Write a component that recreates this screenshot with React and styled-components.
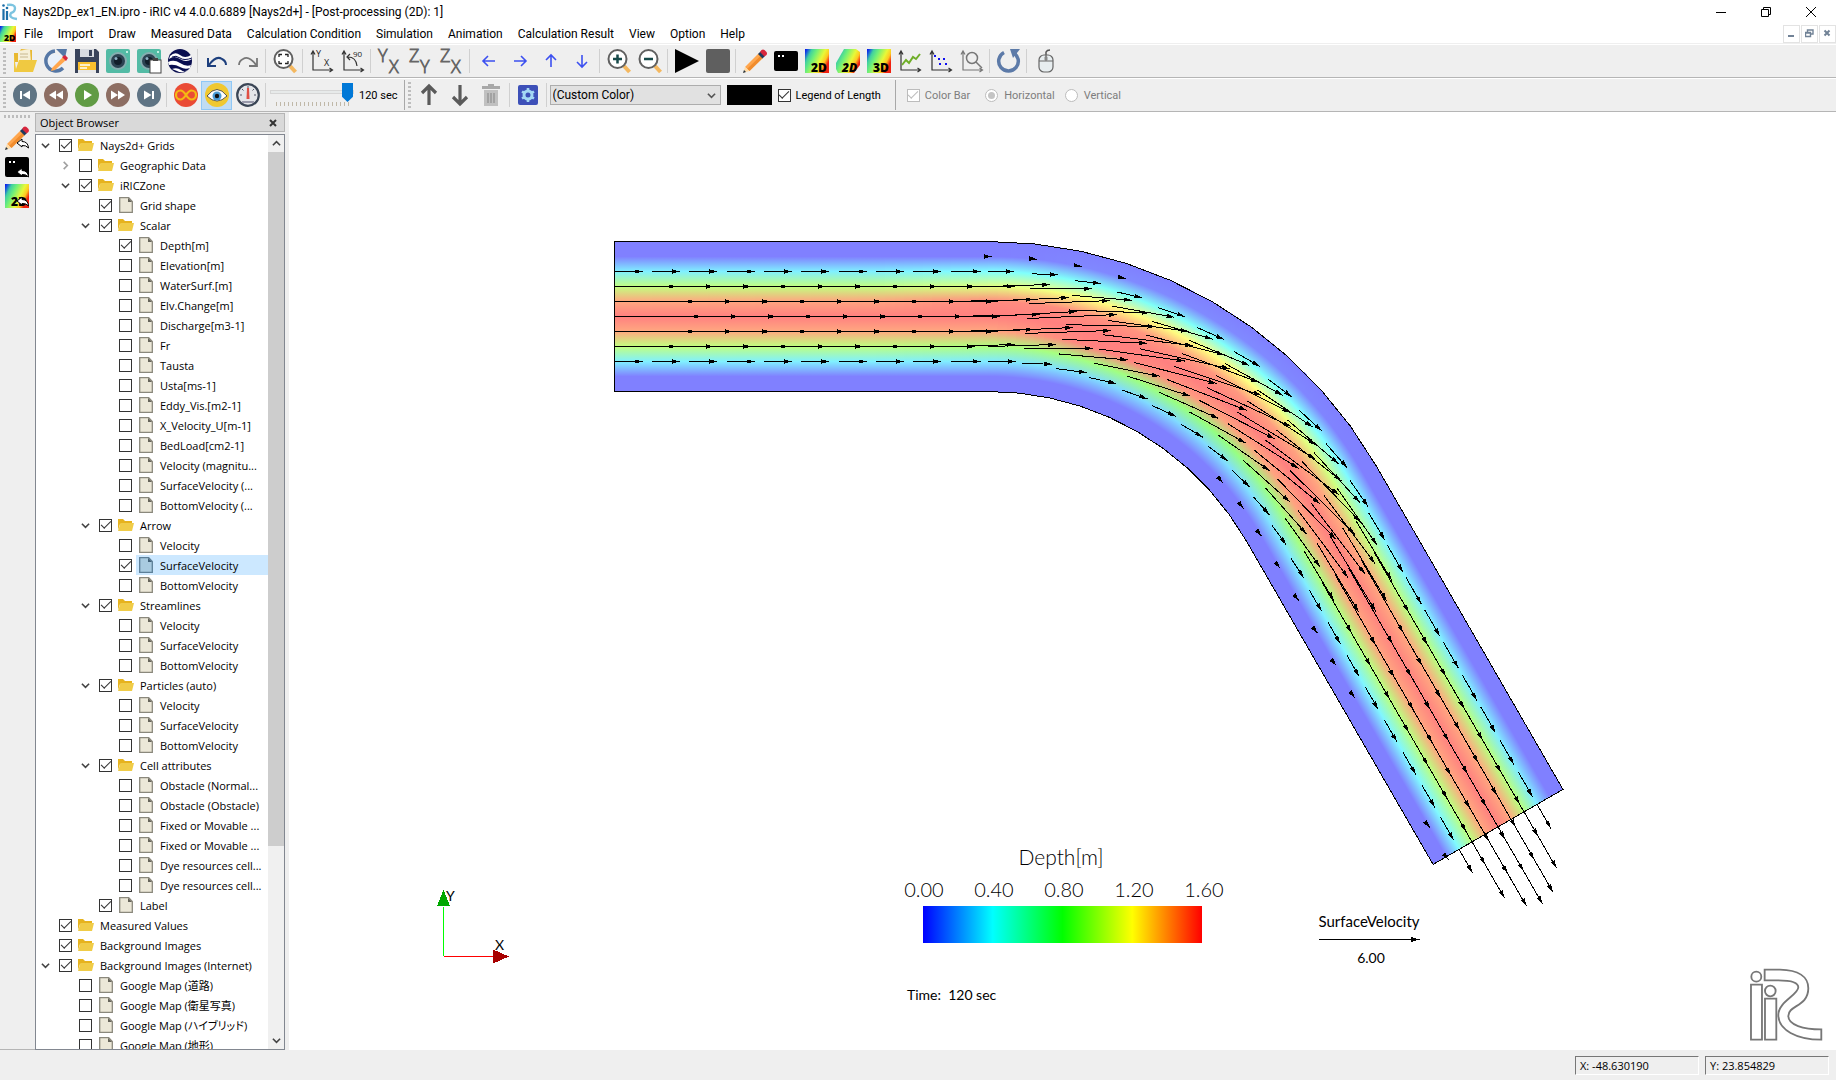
import React, { useState } from 'react'
import styled, { createGlobalStyle, css } from 'styled-components'

const GlobalStyle = createGlobalStyle`
    * { box-sizing: border-box; }
    body {
        margin: 0;
        background: #fff;
        font-family: 'Open Sans', 'Noto Sans CJK JP', sans-serif;
        font-size: 12px;
        color: #000;
    }
    button, input, select { font: inherit; color: inherit; margin: 0; }
`

/* ---------- toolbar icons ---------- */

const Svg = ({ children, size = 24 }) => (
    <svg width={size} height={size} viewBox="0 0 24 24" fill="none" overflow="visible" aria-hidden="true">{children}</svg>
)

const rainbow = (id) => (
    <linearGradient id={id} x1="0" y1="0" x2="1" y2="0.5">
        <stop offset="0" stopColor="#0808f0" />
        <stop offset="0.1" stopColor="#1850e0" />
        <stop offset="0.24" stopColor="#40d0a0" />
        <stop offset="0.42" stopColor="#70f078" />
        <stop offset="0.7" stopColor="#e8f838" />
        <stop offset="0.86" stopColor="#ffc820" />
        <stop offset="1" stopColor="#f02010" />
    </linearGradient>
)

const DimIcon = ({ id, text, skew }) => (
    <Svg>
        <defs>{rainbow(id)}</defs>
        <path d={skew ? 'M8 0h12l4 3v13l-6 8H2l-2-4v-6z' : 'M0 0h24v24H0z'} fill={`url(#${id})`} />
        <text x="6" y="23" fontSize="12" fontWeight="800" fontFamily="Open Sans, sans-serif" fontStyle={skew ? 'italic' : 'normal'} fill="#000">{text}</text>
    </Svg>
)

const PencilShape = () => (
    <g>
        <path d="M2 18 15.500 4.500l4.500 4.500L6.500 22z" fill="#ffa64d" />
        <path d="M4 20 18 6.500l2 2L6.500 22z" fill="#f08c2e" />
        <path d="M15 5l2.500-2.500 4.500 4.500L19.500 9.500z" fill="#1f3a5f" />
        <path d="M17 3l1.500-2q1.500-1 3 0l2 2q1 1.500 0 3L21.500 7.500z" fill="#d7263d" />
        <path d="M2 18l4.500 4L0 24z" fill="#ffdca8" />
        <path d="M1 21l2 2-3 1z" fill="#234" />
    </g>
)

const CameraShape = () => (
    <g>
        <rect width="24" height="24" rx="2" fill="#53bba5" />
        <circle cx="12" cy="12" r="9" fill="#86aeb0" />
        <circle cx="12" cy="12" r="7" fill="#2c4352" />
        <circle cx="12" cy="12" r="4" fill="#121f2b" />
        <circle cx="10" cy="9.500" r="1.500" fill="#8fb0c4" />
        <circle cx="21" cy="3" r="1" fill="#e8fff8" />
    </g>
)

const Magnifier = ({ children }) => (
    <Svg>
        <path d="M17 17l5.500 6" stroke="#f4b860" strokeWidth="4" />
        <circle cx="10.500" cy="10" r="9" fill="#fff" stroke="#606060" strokeWidth="2" />
        {children}
    </Svg>
)

const Axes = ({ children, color = '#333' }) => (
    <Svg>
        <path d="M3 3v18h19M1 5.500 3 2l2 3.500M19.500 19l3 2-3 2" stroke={color} strokeWidth="1.200" />
        {children}
    </Svg>
)

const Letters = ({ a, b }) => (
    <Svg>
        <g fontFamily="Open Sans, sans-serif" fontSize="18" fontWeight="300" fill="#555" stroke="#666" strokeWidth="0.800">
            <text x="0" y="13">{a}</text>
            <text x="11" y="24">{b}</text>
        </g>
    </Svg>
)

const BlueArrow = ({ d }) => <Svg><path d={d} stroke="#3c50f0" strokeWidth="1.600" /></Svg>

const Disc = ({ fill, children }) => (
    <Svg><circle cx="12" cy="12" r="12" fill={fill} />{children}</Svg>
)

const icons = {
    open: <Svg>
        <path d="M1 4h5l2-4 11 1v12H1z" fill="#e8b830" />
        <path d="M5 2l12-2 1 15H5z" fill="#f6efd8" />
        <path d="M7 5h8M7 8h8" stroke="#c8b890" />
        <path d="M1 6v17h19l4-12H6L3 20z" fill="#f0c941" />
    </Svg>,
    edit: <Svg>
        <path d="M11 2a10 10 0 1 0 8 17" stroke="#5577a5" strokeWidth="3.500" />
        <path d="M12 0h11l-2 9z" fill="#5577a5" />
        <circle cx="11" cy="12" r="7" fill="#e8f0fa" />
        <path d="M8 19 19 8l3 3-11 10-4 1z" fill="#ffa64d" />
        <path d="M18 8l3-2 3 3-2 3z" fill="#d7263d" />
    </Svg>,
    save: <Svg>
        <path d="M0 0h21l3 3v21H0z" fill="#39435a" />
        <path d="M5 0h14v8H5z" fill="#d8dbe0" />
        <path d="M14 1h3v6h-3z" fill="#39435a" />
        <path d="M3 13h18v8H3z" fill="#fbc02d" />
        <path d="M5 16h10M5 19h7" stroke="#fff" strokeWidth="1.500" />
        <path d="M3 21h18v3H3z" fill="#e8e8e8" />
    </Svg>,
    camera: <Svg><CameraShape /></Svg>,
    copyCamera: <Svg>
        <CameraShape />
        <rect x="13" y="11" width="11" height="13" fill="#fff" stroke="#444" />
        <path d="M16 9h5v3h-5z" fill="#444" />
    </Svg>,
    earth: <Disc fill="#0a0f50">
        <path d="M2 7q5-5 10-1t11 0l1 4q-6 4-12 0T1 10z" fill="#fff" />
        <path d="M4 8q4-2 8 1t12 0" stroke="#0a0f50" strokeWidth="1" />
        <path d="M0 13q6-3 12 1t11 2l-1 3q-5 2-10-1T1 16z" fill="#fff" />
        <path d="M4 20q5-2 9 1t6 0l-3 2q-4 1-7-1z" fill="#fff" />
    </Disc>,
    undo: <Svg><path d="M3 9v8h8M4 16q7-10 13-6 4 2 4 6" stroke="#1d3f7d" strokeWidth="2" /></Svg>,
    redo: <Svg><path d="M21 9v8h-8M20 16Q13 6 7 10q-4 2-4 6" stroke="#777" strokeWidth="1.800" /></Svg>,
    fit: <Magnifier><path d="M6 8V5.500h3M12 5.500h3V8M15 12v2.500h-3M9 14.500H6V12" stroke="#222" strokeWidth="1.300" /></Magnifier>,
    xy: <Axes>
        <g fontFamily="Open Sans, sans-serif" fontSize="9" fill="#222"><text x="6" y="8">Y</text><text x="14" y="17">X</text></g>
    </Axes>,
    rotate: <Axes>
        <path d="M16 17q-1-9-9-9M9 5L6 8l3 3" stroke="#333" strokeWidth="1.200" />
        <text x="12" y="8" fontFamily="Open Sans, sans-serif" fontSize="8" fill="#222">90</text>
    </Axes>,
    yx: <Letters a="Y" b="X" />,
    zy: <Letters a="Z" b="Y" />,
    zx: <Letters a="Z" b="X" />,
    left: <BlueArrow d="M18 12H6M11 7l-5 5 5 5" />,
    right: <BlueArrow d="M6 12h12M13 7l5 5-5 5" />,
    up: <BlueArrow d="M12 18V6M7 11l5-5 5 5" />,
    down: <BlueArrow d="M12 6v12M7 13l5 5 5-5" />,
    zoomIn: <Magnifier><path d="M6 10h9M10.500 5.500v9" stroke="#174a4a" strokeWidth="2.500" /></Magnifier>,
    zoomOut: <Magnifier><path d="M6 10h9" stroke="#174a4a" strokeWidth="2.500" /></Magnifier>,
    play: <Svg><path d="M0 0l24 12L0 24z" fill="#000" /></Svg>,
    stop: <Svg><rect width="24" height="24" rx="2" fill="#5f5f5f" /></Svg>,
    pencil: <Svg><PencilShape /></Svg>,
    console: <Svg><rect y="2" width="24" height="20" rx="2" fill="#000" /><path d="M4 6h2v2H4zM8 6h2v2H8z" fill="#fff" /></Svg>,
    d2: <DimIcon id="rb1" text="2D" />,
    d2s: <DimIcon id="rb2" text="2D" skew />,
    d3: <DimIcon id="rb3" text="3D" />,
    line: <Axes><path d="M4 16l4-5 3 3 4-6 3 2 4-5" stroke="#6fae28" strokeWidth="2" /></Axes>,
    scatter: <Axes><path d="M5 6h2v2H5zM9 9h2v2H9zM14 9h2v2h-2zM10 14h2v2h-2zM16 14h2v2h-2z" fill="#1010f0" /></Axes>,
    graphZoom: <Axes color="#777"><circle cx="12" cy="9" r="5.500" stroke="#777" strokeWidth="1.500" /><path d="M16 13l6 6" stroke="#777" strokeWidth="1.500" /></Axes>,
    reload: <Svg>
        <path d="M16 3.500A9.800 9.800 0 1 1 7 3.500" stroke="#5c7aa8" strokeWidth="3.500" />
        <path d="M13 0h10l-7 9z" fill="#5c7aa8" />
    </Svg>,
    mouse: <Svg>
        <path d="M12 7V3q1-2 4-2" stroke="#555" strokeWidth="1.500" />
        <rect x="5" y="6" width="14" height="17" rx="5" fill="#e8eef0" stroke="#666" strokeWidth="1.200" />
        <path d="M5 12h14M12 6v6" stroke="#666" strokeWidth="1.200" />
        <rect x="10.500" y="7" width="3" height="5" rx="1.500" fill="#888" />
    </Svg>,
    first: <Disc fill="#5f7484"><path d="M7 8h2v8H7zM17 7.500v9L9.500 12z" fill="#fff" /></Disc>,
    rewind: <Disc fill="#8d6e63"><path d="M12 7.500v9L5 12zM19 7.500v9L12 12z" fill="#fff" /></Disc>,
    run: <Disc fill="#619b45"><path d="M9 7l8 5-8 5z" fill="#fff" /></Disc>,
    forward: <Disc fill="#8d6e63"><path d="M5 7.500v9l7-4.500zM12 7.500v9l7-4.500z" fill="#fff" /></Disc>,
    last: <Disc fill="#5f7484"><path d="M15 8h2v8h-2zM7 7.500v9l7.500-4.500z" fill="#fff" /></Disc>,
    loop: <Disc fill="#ea4b35">
        <path d="M12 12c-2-3-3.500-4.500-5.500-4.500a4.500 4.500 0 0 0 0 9c2 0 3.500-1.500 5.500-4.500s3.500-4.500 5.500-4.500a4.500 4.500 0 0 1 0 9c-2 0-3.500-1.500-5.500-4.500z" stroke="#f5b912" strokeWidth="2.200" />
    </Disc>,
    eye: <Disc fill="#f0c830">
        <path d="M2 13q10-13 20 0-10 10-20 0z" fill="#fff" stroke="#333" strokeWidth="0.800" />
        <circle cx="12" cy="13" r="4.500" fill="#4a9ad4" />
        <circle cx="12" cy="13" r="2.200" fill="#111" />
    </Disc>,
    gauge: <Svg>
        <circle cx="12" cy="12" r="10.800" fill="#e4e6ea" stroke="#3b4656" strokeWidth="2.200" />
        <path d="M12 3v3M4 12h2M18 12h2M6 6l1.500 1.500M18 6l-1.500 1.500" stroke="#556" />
        <path d="M11 5h2l.5 11h-3z" fill="#e04f44" />
        <path d="M6 19h12" stroke="#99a" strokeWidth="2" />
    </Svg>,
    moveUp: <Svg><path d="M12 22V3M5 10l7-7 7 7" stroke="#5a5a5a" strokeWidth="3.200" /></Svg>,
    moveDown: <Svg><path d="M12 2v19M5 14l7 7 7-7" stroke="#5a5a5a" strokeWidth="3.200" /></Svg>,
    trash: <Svg>
        <path d="M3 3h18v3H3zM9 1h6v2H9z" fill="#a8a8a8" />
        <path d="M5 7h14v16H5z" fill="#c0c0c0" />
        <path d="M9 10v10M12 10v10M15 10v10" stroke="#989898" strokeWidth="1.500" />
    </Svg>,
    gear: <Svg>
        <rect x="2" y="2" width="20" height="20" rx="2" fill="#3d50b8" />
        <circle cx="12" cy="12" r="4" stroke="#a4d8f4" strokeWidth="3" />
        <path d="M12 5v2.500M12 16.500V19M6 8.500l2 1.200M16 14.300l2 1.200M6 15.500l2-1.200M16 9.700l2-1.200" stroke="#a4d8f4" strokeWidth="2.600" />
    </Svg>,
}

/* small reply arrow shown over the "back to ..." icons */
const BackArrow = () => (
    <path d="M12 17l5-4v2.500q6 0 6.500 6.500-2.500-3-6.500-2.500V21z" fill="#fff" stroke="#000" strokeWidth="1" />
)

const FolderIcon = () => (
    <svg width="16" height="14" viewBox="0 0 16 14" aria-hidden="true">
        <path d="M0 1h5l2 2h7v3H0z" fill="#e6b31e" />
        <path d="M0 1v11l2-6h12V4H6L4 1z" fill="#e6b31e" />
        <path d="M2.500 5H16l-2 8H0z" fill="#f0cc48" />
    </svg>
)

const FileIcon = ({ tint }) => (
    <svg width="14" height="16" viewBox="0 0 14 16" aria-hidden="true">
        <path d="M.7.700h9L13.300 4.500v10.800H.7z" fill={tint ? '#a9cbe0' : '#ece8d8'} stroke={tint ? '#5c7f98' : '#8a887c'} strokeWidth="1.300" />
        <path d="M9 1v4h4z" fill={tint ? '#42627a' : '#66645a'} />
    </svg>
)

/* ---------- window frame ---------- */

const Window = styled.div`
    display: flex;
    flex-direction: column;
    height: 100vh;
    background: #efefef;
`

const TitleBar = styled.header`
    display: flex;
    align-items: center;
    height: 24px;
    padding-left: 2px;
    background: #fff;
`

const Title = styled.h1`
    flex: 1;
    margin: 0 0 0 5px;
    font-family: Roboto, sans-serif;
    font-size: 12px;
    font-weight: 400;
    line-height: 24px;
    white-space: nowrap;
`

const WindowButton = styled.button`
    display: grid;
    place-items: center;
    width: 45px;
    height: 20px;
    padding: 0;
    border: 0;
    background: transparent;
    &:last-child { margin-right: 3px; }
`

const MenuBar = styled.nav`
    display: flex;
    align-items: center;
    height: 20px;
    border-bottom: 1px solid #efefef;
    background: #fff;
`

const MenuItems = styled.div`
    display: flex;
    flex: 1;
    gap: 15px;
    margin-left: 8px;
`

const MenuItem = styled.button`
    padding: 0;
    border: 0;
    background: transparent;
    font-family: Roboto, sans-serif;
    font-size: 12px;
    line-height: 18px;
    white-space: nowrap;
`

const MdiButton = styled.button`
    display: grid;
    place-items: center;
    width: 17px;
    height: 18px;
    margin-left: 1px;
    padding: 0;
    border: 1px solid #e3e3e3;
    background: #fff;
`

const ToolBar = styled.div`
    display: flex;
    align-items: center;
    height: 34px;
    border-top: 1px solid #fff;
    border-bottom: 1px solid #b5b5b5;
    white-space: nowrap;
`

const Grip = styled.span`
    width: 3px;
    height: 26px;
    margin: 0 3px;
    background: repeating-linear-gradient(#bdbdbd 0 2px, transparent 2px 4px);
`

const ToolButton = styled.button`
    display: grid;
    place-items: center;
    width: 31px;
    height: 29px;
    padding: 0;
    border: 1px solid transparent;
    background: transparent;
    ${p => p.$active && css`
        border-color: #90c8f6;
        background: #c0dcf3;
    `}
`

const Separator = styled.span`
    width: 1px;
    height: 24px;
    margin: 0 3px 0 2px;
    background: #d0d0d0;
`

const Divider = styled.span`
    width: 1px;
    height: 30px;
    margin-left: ${p => p.$gap}px;
    background: #a8a8a8;
`

const SliderBox = styled.label`
    display: flex;
    flex-direction: column;
    width: 84px;
    height: 26px;
    margin-left: 1px;
`

const Slider = styled.input`
    width: 84px;
    height: 20px;
    appearance: none;
    background: transparent;
    &::-webkit-slider-runnable-track {
        height: 4px;
        border: 1px solid #d6d6d6;
        background: #e7eaea;
    }
    &::-webkit-slider-thumb {
        appearance: none;
        width: 11px;
        height: 19px;
        margin-top: -8px;
        background: #0078d7;
        clip-path: polygon(0 0, 100% 0, 100% 72%, 50% 100%, 0 72%);
    }
`

const Ticks = styled.span`
    height: 4px;
    margin: 0 4px 0 6px;
    background: repeating-linear-gradient(90deg, #c0b8a8 0 1px, transparent 1px 4px);
`

const ToolText = styled.span`
    margin-left: ${p => p.$gap || 5}px;
    font-family: Roboto, 'Noto Sans CJK JP', sans-serif;
    font-size: 11px;
    color: ${p => (p.$muted ? '#7d7d7d' : '#000')};
`

const SelectWrap = styled.div`
    display: grid;
    align-items: center;
    & > * { grid-area: 1 / 1; }
    & > svg { justify-self: end; margin-right: 5px; pointer-events: none; }
`

const Select = styled.select`
    width: 171px;
    height: 20px;
    padding: 0 2px;
    appearance: none;
    border: 1px solid #adadad;
    border-radius: 0;
    background: #e1e1e1;
    font-family: Roboto, sans-serif;
    font-size: 12px;
`

const ColorButton = styled.button`
    width: 45px;
    height: 20px;
    margin: 0 6px;
    padding: 0;
    border: 0;
    background: #000;
`

const CheckLabel = styled.label`
    display: flex;
    align-items: center;
    margin-left: ${p => p.$gap || 0}px;
`

const CheckBox = styled.input`
    display: grid;
    place-items: center;
    flex: none;
    width: 13px;
    height: 13px;
    appearance: none;
    border: 1px solid ${p => (p.disabled ? '#bcbcbc' : '#333')};
    border-radius: ${p => (p.type === 'radio' ? '50%' : 0)};
    background: #fff;
    &:checked::after {
        content: '';
        ${p => p.type === 'radio' ? css`
            width: 7px;
            height: 7px;
            border-radius: 50%;
            background: #c4c4c4;
        ` : css`
            width: 9px;
            height: 4px;
            margin-top: -3px;
            border: solid ${p.disabled ? '#bcbcbc' : '#333'};
            border-width: 0 0 1px 1px;
            transform: rotate(-45deg);
        `}
    }
`

const Workspace = styled.main`
    display: flex;
    flex: 1;
    min-height: 0;
`

const SideBar = styled.div`
    display: flex;
    flex-direction: column;
    align-items: center;
    width: 35px;
    padding-right: 1px;
    border-bottom: 1px solid #b5b5b5;
`

const SideGrip = styled.span`
    width: 26px;
    height: 3px;
    margin: 3px 0 5px;
    background: repeating-linear-gradient(90deg, #bdbdbd 0 2px, transparent 2px 4px);
`

const Dock = styled.aside`
    display: flex;
    flex-direction: column;
    width: 250px;
    margin-right: 4px;
`

const DockTitle = styled.div`
    display: flex;
    align-items: center;
    justify-content: space-between;
    height: 19px;
    margin: 1px 0 2px;
    padding: 0 6px 0 4px;
    border: 1px solid #b5b5b5;
    background: #d9d9d9;
    font-size: 11px;
`

const DockClose = styled.button`
    display: grid;
    place-items: center;
    width: 10px;
    height: 14px;
    padding: 0;
    border: 0;
    background: transparent;
`

const TreeFrame = styled.div`
    display: flex;
    flex: 1;
    min-height: 0;
    border: 1px solid #828790;
    background: #fff;
`

const Tree = styled.ul`
    flex: 1;
    margin: 0;
    padding: 0;
    overflow: hidden;
    list-style: none;
`

const TreeRow = styled.li`
    display: flex;
    align-items: center;
    height: 20px;
    padding-left: ${p => p.$level * 20 + 2}px;
`

const Expander = styled.button`
    display: grid;
    place-items: center;
    width: 14px;
    height: 14px;
    margin-right: 7px;
    padding: 0;
    border: 0;
    background: transparent;
    visibility: ${p => (p.$shown ? 'visible' : 'hidden')};
`

const TreeLabel = styled.label`
    display: flex;
    align-items: center;
    flex: 1;
    height: 20px;
    margin-left: 4px;
    padding-left: 2px;
    font-size: 11px;
    font-feature-settings: 'palt';
    white-space: nowrap;
    background: ${p => (p.$selected ? '#cce8ff' : 'transparent')};
    & > svg { flex: none; margin-right: ${p => (p.$file ? 7 : 6)}px; margin-left: ${p => (p.$file ? 1 : 0)}px; }
`

const ScrollBar = styled.div`
    display: flex;
    flex-direction: column;
    width: 16px;
    background: #f0f0f0;
`

const ScrollButton = styled.button`
    display: grid;
    place-items: center;
    height: 17px;
    padding: 0;
    border: 0;
    background: transparent;
`

const Thumb = styled.span`
    flex: 694;
    background: #cdcdcd;
`

const Trough = styled.span`
    flex: 186;
`

const Viewport = styled.section`
    flex: 1;
    min-width: 0;
    background: #fff;
    & > svg { display: block; width: 100%; height: 100%; }
`

const StatusBar = styled.footer`
    display: flex;
    align-items: center;
    justify-content: flex-end;
    gap: 6px;
    height: 30px;
    padding-right: 7px;
`

const StatusField = styled.output`
    width: 124px;
    height: 19px;
    padding-left: 4px;
    border: 1px solid;
    border-color: #777 #fff #fff #777;
    font-size: 11px;
    line-height: 17px;
`

/* ---------- simulation result ---------- */

// grid of the channel: 31 sections, 11 nodes across, 60 degree bend
const START = { x: 614.5, y: 241.5 }
const BEND_X = 988
const RADIUS = 448
const CENTER_Y = START.y + RADIUS
const STEP = 37.4
const SIN60 = Math.sin(Math.PI / 3)

const node = (i, j) => {
    if (i <= 10) return [START.x + (BEND_X - START.x) * i / 10, START.y + 15 * j]
    const a = Math.min(i - 10, 10) * 6 * Math.PI / 180
    const r = RADIUS - 15 * j
    const over = Math.max(i - 20, 0) * STEP
    return [BEND_X + r * Math.sin(a) + over * 0.5, CENTER_Y - r * Math.cos(a) + over * SIN60]
}

// relative depth across the channel at some sections
const depthKeys = [
    [0, [0, 0, .22, .63, .92, 1, .92, .63, .22, 0, 0]],
    [7, [0, 0, .22, .63, .93, 1, .92, .62, .22, 0, 0]],
    [10, [0, 0, .25, .69, .98, 1, .92, .59, .21, 0, 0]],
    [13, [0, .02, .27, .76, .96, 1, 1, .57, .18, 0, 0]],
    [17, [0, .02, .26, .75, .95, 1, .93, .54, .18, 0, 0]],
    [20, [0, 0, .24, .65, .92, 1, .93, .57, .2, 0, 0]],
    [24, [0, 0, .22, .61, .92, .99, .93, .61, .23, 0, 0]],
    [30, [0, 0, .21, .61, .92, 1, .92, .62, .24, 0, 0]],
]

const ramp = [[0, 0, 255], [0, 255, 255], [0, 255, 0], [255, 255, 0], [255, 0, 0]]

const depthColor = (t) => {
    const k = Math.min(Math.floor(t * 4), 3)
    const f = t * 4 - k
    const c = ramp[k].map((v, n) => Math.round((v + (ramp[k + 1][n] - v) * f + 255) / 2))
    return `rgb(${c.join(',')})`
}

const depthAt = (i) => {
    const n = Math.max(depthKeys.findIndex(k => k[0] >= i), 1)
    const [i0, a] = depthKeys[n - 1]
    const [i1, b] = depthKeys[n]
    return a.map((v, j) => v + (b[j] - v) * (i - i0) / (i1 - i0))
}

// arrow vectors (dx, dy) for sections 10..21 of each grid line
const bendArrows = {
    2: [[26, 0], [26, 1], [26, 3], [25, 6], [27, 9], [27, 12], [26, 15], [24, 18], [23, 21], [21, 24], [18, 26], [16, 27]],
    3: [[62, -2], [62, 0], [60, 5], [62, 11], [61, 18], [60, 25], [58, 32], [55, 37], [51, 44], [46, 50], [40, 57], [36, 60]],
    4: [[81, -4], [81, -3], [81, 3], [81, 11], [79, 20], [77, 29], [74, 37], [69, 44], [65, 51], [59, 61], [51, 68], [44, 73]],
    5: [[89, -5], [90, -4], [90, 2], [90, 11], [90, 20], [87, 29], [84, 39], [78, 47], [74, 55], [65, 64], [54, 71], [46, 76]],
    6: [[85, -4], [86, -3], [85, 4], [86, 12], [83, 21], [80, 31], [76, 39], [71, 45], [66, 54], [58, 60], [50, 67], [42, 69]],
    7: [[68, -2], [69, 0], [69, 6], [66, 13], [63, 20], [59, 26], [56, 31], [52, 36], [47, 42], [41, 46], [35, 49], [30, 50]],
    8: [[28, 0], [30, 1], [31, 4], [27, 6], [26, 9], [24, 11], [22, 13], [20, 15], [18, 17], [16, 18], [14, 19], [13, 20]],
}

const straight = { 2: 28, 3: 62, 4: 81, 5: 87, 6: 81, 7: 62, 8: 28 }
const outlet = { 2: [31, 28], 3: [69, 65], 4: [84, 84], 5: [88, 89], 6: [80, 83], 7: [58, 65], 8: [24, 27] }

const arrows = []
for (let j = 2; j <= 8; j++) {
    for (let i = 0; i <= 30; i++) {
        const [x, y] = node(i, j)
        let v
        if (i < 10) v = [straight[j] + (i === 9 ? 2 : 0), i === 9 && j > 3 && j < 8 ? -2 : 0]
        else if (i <= 21) v = bendArrows[j][i - 10]
        else {
            const [a, b] = outlet[j]
            const len = a + (b - a) * (i - 22) / 8
            v = [len * 0.5, len * SIN60]
        }
        arrows.push([x, y, x + v[0], y + v[1]])
    }
}
// still water near the banks
;[10, 11, 12, 13].forEach(i => {
    const [x, y] = node(i, 1)
    arrows.push([x, y, x + 4, y + (i - 10) * 0.3])
})
;[18, 19, 20, 21, 22, 23, 24, 25, 29, 30].forEach(i => {
    const [x, y] = node(i, 9)
    arrows.push([x, y, x + 2.5, y + 3])
})

const headPath = ([x0, y0, x1, y1], size = 8) => {
    const len = Math.hypot(x1 - x0, y1 - y0)
    const ux = (x1 - x0) / len
    const uy = (y1 - y0) / len
    const bx = x1 - ux * size
    const by = y1 - uy * size
    const w = size * 0.28
    return `M${x1} ${y1}L${bx - uy * w} ${by + ux * w}L${bx + uy * w} ${by - ux * w}Z`
}

const SLICES = 4
const slices = Array.from({ length: 30 * SLICES }, (_, n) => {
    const i0 = n / SLICES
    const i1 = (n + 1) / SLICES
    return {
        id: `depth${n}`,
        corners: [node(i0, 0), node(Math.min(i1 + 0.04, 30), 0), node(Math.min(i1 + 0.04, 30), 10), node(i0, 10)],
        from: node((i0 + i1) / 2, 0),
        to: node((i0 + i1) / 2, 10),
        colors: depthAt((i0 + i1) / 2).map(depthColor),
    }
})

const sections = Array.from({ length: 31 }, (_, i) => i)
const outline = [...sections.map(i => node(i, 0)), ...sections.map(i => node(30 - i, 10))]
const points = (list) => list.map(p => p.join(',')).join(' ')

const SceneText = styled.text`
    font-family: Lato, sans-serif;
    font-weight: ${p => (p.$bold ? 400 : 300)};
    font-size: ${p => p.$size}px;
    text-anchor: ${p => p.$anchor || 'start'};
    fill: #000;
    white-space: pre;
`

const Scene = () => (
    <svg viewBox="289 112 1547 938" role="img" aria-label="Depth and surface velocity">
        <defs>
            {slices.map(s => (
                <linearGradient key={s.id} id={s.id} gradientUnits="userSpaceOnUse" x1={s.from[0]} y1={s.from[1]} x2={s.to[0]} y2={s.to[1]}>
                    {s.colors.map((c, j) => <stop key={j} offset={j / 10} stopColor={c} />)}
                </linearGradient>
            ))}
            <linearGradient id="scale">
                {ramp.map((c, k) => <stop key={k} offset={k / 4} stopColor={`rgb(${c.join(',')})`} />)}
            </linearGradient>
        </defs>

        <g shapeRendering="crispEdges">
            {slices.map(s => <polygon key={s.id} points={points(s.corners)} fill={`url(#${s.id})`} />)}
            <polygon points={points(outline)} fill="none" stroke="#000" />
            {arrows.map((a, n) => <line key={n} x1={a[0]} y1={a[1]} x2={a[2]} y2={a[3]} stroke="#000" />)}
            <path d={arrows.map(a => headPath(a)).join('')} fill="#000" />

            <path d="M443.500 956V907" stroke="#0f0" />
            <path d="M443.500 956.500H493" stroke="#f00" />
            <path d="M443.500 890l6.500 16h-13z" fill="#00a800" />
            <path d="M509 956.500L493 949.500v14z" fill="#a80000" />

            <rect x="923" y="906" width="279" height="37" fill="url(#scale)" />
            <path d="M1319 939.500h101" stroke="#000" />
            <path d="M1420 939.500l-9-2.500v5z" fill="#000" />
        </g>

        <SceneText $size={14} $bold x="446" y="901">Y</SceneText>
        <SceneText $size={14} $bold x="495" y="950">X</SceneText>

        <SceneText $size={21} $anchor="middle" x="1061" y="865">Depth[m]</SceneText>
        {['0.00', '0.40', '0.80', '1.20', '1.60'].map((v, k) => (
            <SceneText key={v} $size={20} $anchor="middle" x={924 + k * 70} y="897">{v}</SceneText>
        ))}
        <SceneText $size={15} $bold $anchor="middle" x="1369" y="927">SurfaceVelocity</SceneText>
        <SceneText $size={14} $bold $anchor="middle" x="1371" y="963">6.00</SceneText>
        <SceneText $size={14} $bold x="907" y="1000">Time:  120 sec</SceneText>

        <g transform="translate(1540 940) scale(0.3333)" fill="#fff" stroke="#777" strokeWidth="5.500">
            <circle cx="649" cy="110" r="15" />
            <circle cx="691" cy="153" r="16" />
            <path d="M633 134h33v165h-33zM675 176h34v123h-34z" />
            <path d="M674 89H720C775 90 805 110 805 145C805 200 745 195 745 228C745 255 790 268 844 268V299C770 299 715 270 715 225C715 185 775 165 775 142C775 125 750 121 715 121H674Z" />
        </g>
    </svg>
)

/* ---------- data ---------- */

const menus = ['File', 'Import', 'Draw', 'Measured Data', 'Calculation Condition', 'Simulation', 'Animation', 'Calculation Result', 'View', 'Option', 'Help']

const mainTools = [
    'open', 'edit', 'save', 'camera', 'copyCamera', 'earth', '|', 'undo', 'redo', '|', 'fit', '|', 'xy', 'rotate', '|',
    'yx', 'zy', 'zx', '|', 'left', 'right', 'up', 'down', '|', 'zoomIn', 'zoomOut', '|', 'play', 'stop', '|',
    'pencil', 'console', 'd2', 'd2s', 'd3', 'line', 'scatter', 'graphZoom', '|', 'reload', '|', 'mouse',
]

const playTools = ['first', 'rewind', 'run', 'forward', 'last', '|', 'loop', 'eye', 'gauge', '|']

// level, name, checked, expander ('v' open, '>' closed), file
const vectors = ['Velocity', 'SurfaceVelocity', 'BottomVelocity']
const file = (level, name, checked) => ({ level, name, checked, file: true })
const folder = (level, name, checked, arrow) => ({ level, name, checked, arrow })

const treeItems = [
    folder(0, 'Nays2d+ Grids', true, 'v'),
    folder(1, 'Geographic Data', false, '>'),
    folder(1, 'iRICZone', true, 'v'),
    file(2, 'Grid shape', true),
    folder(2, 'Scalar', true, 'v'),
    file(3, 'Depth[m]', true),
    ...['Elevation[m]', 'WaterSurf.[m]', 'Elv.Change[m]', 'Discharge[m3-1]', 'Fr', 'Tausta', 'Usta[ms-1]', 'Eddy_Vis.[m2-1]',
        'X_Velocity_U[m-1]', 'BedLoad[cm2-1]', 'Velocity (magnitu...', 'SurfaceVelocity (...', 'BottomVelocity (...'].map(n => file(3, n, false)),
    folder(2, 'Arrow', true, 'v'),
    ...vectors.map((n, k) => ({ ...file(3, n, k === 1), selected: k === 1 })),
    folder(2, 'Streamlines', true, 'v'),
    ...vectors.map(n => file(3, n, false)),
    folder(2, 'Particles (auto)', true, 'v'),
    ...vectors.map(n => file(3, n, false)),
    folder(2, 'Cell attributes', true, 'v'),
    ...['Obstacle (Normal...', 'Obstacle (Obstacle)', 'Fixed or Movable ...', 'Fixed or Movable ...', 'Dye resources cell...', 'Dye resources cell...'].map(n => file(3, n, false)),
    file(2, 'Label', true),
    folder(0, 'Measured Values', true),
    folder(0, 'Background Images', true),
    folder(0, 'Background Images (Internet)', true, 'v'),
    ...['道路', '衛星写真', 'ハイブリッド', '地形'].map(n => file(1, `Google Map (${n})`, false)),
]

const Chevron = ({ dir = 'down', color = '#444', size = 9 }) => {
    const paths = { down: 'M1 3l4 4 4-4', up: 'M1 7l4-4 4 4', right: 'M3 1l4 4-4 4' }
    return (
        <svg width={size} height={size} viewBox="0 0 10 10" fill="none" aria-hidden="true">
            <path d={paths[dir]} stroke={color} strokeWidth="1.800" />
        </svg>
    )
}

const Tools = ({ names, active }) => names.map((name, n) => (
    name === '|'
        ? <Separator key={n} />
        : <ToolButton key={n} aria-label={name} $active={name === active}>{icons[name]}</ToolButton>
))

const ObjectBrowser = () => {
    const [checks, setChecks] = useState(treeItems.map(t => t.checked))
    const toggle = (n) => setChecks(checks.map((c, k) => (k === n ? !c : c)))

    return (
        <Dock>
            <DockTitle>
                Object Browser
                <DockClose aria-label="Close Object Browser">
                    <svg width="8" height="8" viewBox="0 0 8 8"><path d="M1 1l6 6M7 1L1 7" stroke="#333" strokeWidth="2" /></svg>
                </DockClose>
            </DockTitle>
            <TreeFrame>
                <Tree>
                    {treeItems.map((t, n) => (
                        <TreeRow key={n} $level={t.level}>
                            <Expander $shown={!!t.arrow} aria-label="Expand">
                                <Chevron dir={t.arrow === '>' ? 'right' : 'down'} color={t.arrow === '>' ? '#a0a0a0' : '#444'} />
                            </Expander>
                            <CheckBox type="checkbox" id={`item${n}`} checked={checks[n]} onChange={() => toggle(n)} />
                            <TreeLabel htmlFor={`item${n}`} $file={t.file} $selected={t.selected}>
                                {t.file ? <FileIcon tint={t.selected} /> : <FolderIcon />}
                                {t.name}
                            </TreeLabel>
                        </TreeRow>
                    ))}
                </Tree>
                <ScrollBar>
                    <ScrollButton aria-label="Scroll up"><Chevron dir="up" /></ScrollButton>
                    <Thumb />
                    <Trough />
                    <ScrollButton aria-label="Scroll down"><Chevron /></ScrollButton>
                </ScrollBar>
            </TreeFrame>
        </Dock>
    )
}

const App = () => {
    const [time, setTime] = useState(120)
    const [legend, setLegend] = useState(true)

    return (
        <Window>
            <GlobalStyle />
            <TitleBar>
                <svg width="16" height="18" viewBox="0 0 16 18" fill="none" aria-hidden="true">
                    <path d="M1.500 6v11M5 8v9" stroke="#1d6fa8" strokeWidth="2.200" />
                    <circle cx="1.500" cy="2.500" r="1.300" fill="#1d6fa8" />
                    <circle cx="5" cy="5" r="1.300" fill="#1d6fa8" />
                    <path d="M5 2q8-1 8 3t-4 5q-3 5 6 6" stroke="#7cc4e0" strokeWidth="2.400" />
                </svg>
                <Title>Nays2Dp_ex1_EN.ipro - iRIC v4 4.0.0.6889 [Nays2d+] - [Post-processing (2D): 1]</Title>
                <WindowButton aria-label="Minimize"><svg width="10" height="10"><path d="M0 5.500h10" stroke="#000" /></svg></WindowButton>
                <WindowButton aria-label="Restore">
                    <svg width="10" height="10" fill="none"><path d="M.5 2.500h7v7h-7zM2.500 2V.5h7v7H8" stroke="#000" /></svg>
                </WindowButton>
                <WindowButton aria-label="Close"><svg width="10" height="10"><path d="M0 0l10 10M10 0L0 10" stroke="#000" /></svg></WindowButton>
            </TitleBar>

            <MenuBar>
                <svg width="16" height="16" viewBox="0 0 24 24" overflow="visible" aria-hidden="true">
                    <defs>{rainbow('rb0')}</defs>
                    <path d="M0 0h24v24H0z" fill="url(#rb0)" />
                    <text x="6" y="23" fontSize="13" fontWeight="800">2D</text>
                </svg>
                <MenuItems>
                    {menus.map(m => <MenuItem key={m}>{m}</MenuItem>)}
                </MenuItems>
                <MdiButton aria-label="Minimize view"><svg width="9" height="9"><path d="M1 7h6" stroke="#718296" strokeWidth="2" /></svg></MdiButton>
                <MdiButton aria-label="Restore view">
                    <svg width="9" height="9" fill="none"><path d="M.5 3.500h5v4h-5zM.5 4h5M2.500 3V1h5.500v4H6" stroke="#718296" strokeWidth="1.400" /></svg>
                </MdiButton>
                <MdiButton aria-label="Close view"><svg width="9" height="9"><path d="M1.500 1.500l5 5M6.500 1.500l-5 5" stroke="#718296" strokeWidth="2" /></svg></MdiButton>
            </MenuBar>

            <ToolBar>
                <Grip />
                <Tools names={mainTools} />
            </ToolBar>

            <ToolBar>
                <Grip />
                <Tools names={playTools} active="eye" />
                <SliderBox>
                    <Slider type="range" aria-label="Time step" min="0" max="120" value={time} onChange={e => setTime(e.target.value)} />
                    <Ticks />
                </SliderBox>
                <ToolText>{time} sec</ToolText>
                <Divider $gap={6} />
                <Grip />
                <ToolButton aria-label="Move up">{icons.moveUp}</ToolButton>
                <ToolButton aria-label="Move down">{icons.moveDown}</ToolButton>
                <ToolButton aria-label="Delete" disabled>{icons.trash}</ToolButton>
                <Separator />
                <ToolButton aria-label="Properties">{icons.gear}</ToolButton>
                <Separator />
                <SelectWrap>
                    <Select aria-label="Color" defaultValue="custom">
                        <option value="custom">(Custom Color)</option>
                    </Select>
                    <Chevron color="#555" />
                </SelectWrap>
                <ColorButton aria-label="Arrow color" />
                <CheckLabel>
                    <CheckBox type="checkbox" checked={legend} onChange={() => setLegend(!legend)} />
                    <ToolText>Legend of Length</ToolText>
                </CheckLabel>
                <Divider $gap={14} />
                <CheckLabel $gap={11}>
                    <CheckBox type="checkbox" checked disabled readOnly />
                    <ToolText $muted>Color Bar</ToolText>
                </CheckLabel>
                <CheckLabel $gap={15}>
                    <CheckBox type="radio" name="direction" checked disabled readOnly />
                    <ToolText $muted $gap={6}>Horizontal</ToolText>
                </CheckLabel>
                <CheckLabel $gap={10}>
                    <CheckBox type="radio" name="direction" disabled />
                    <ToolText $muted $gap={6}>Vertical</ToolText>
                </CheckLabel>
            </ToolBar>

            <Workspace>
                <SideBar>
                    <SideGrip />
                    <ToolButton aria-label="Back to pre-processing"><Svg><PencilShape /><BackArrow /></Svg></ToolButton>
                    <ToolButton aria-label="Back to solver console">
                        <Svg><rect y="2" width="24" height="20" rx="2" fill="#000" /><path d="M4 6h2v2H4zM8 6h2v2H8z" fill="#fff" /><BackArrow /></Svg>
                    </ToolButton>
                    <ToolButton aria-label="Back to 2D view">
                        <Svg>
                            <defs>{rainbow('rb4')}</defs>
                            <path d="M0 0h24v24H0z" fill="url(#rb4)" />
                            <text x="6" y="22" fontSize="12" fontWeight="800" fill="#000">2D</text>
                            <BackArrow />
                        </Svg>
                    </ToolButton>
                </SideBar>
                <ObjectBrowser />
                <Viewport><Scene /></Viewport>
            </Workspace>

            <StatusBar>
                <StatusField>X: -48.630190</StatusField>
                <StatusField>Y: 23.854829</StatusField>
            </StatusBar>
        </Window>
    )
}

export default App
